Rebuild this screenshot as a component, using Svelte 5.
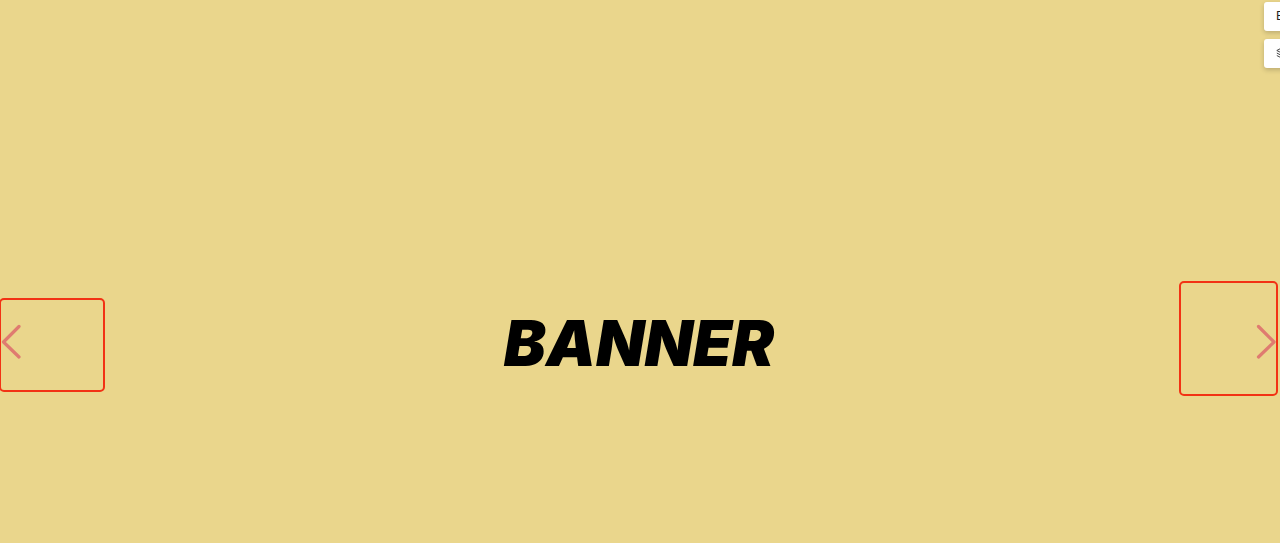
<script>
  const tools = ['text', 'layers'];
</script>

<main class="hero">
  <aside class="tools">
    {#each tools as tool}
      <button type="button" class="tool" aria-label={tool}>
        {#if tool === 'text'}
          E
        {:else}
          <svg width="12" height="12" viewBox="0 0 12 12" fill="none" stroke="#444">
            <path d="M6 .8 11.2 3.5 6 6.2.8 3.5ZM.8 6 6 8.7 11.2 6M.8 8.5 6 11.2 11.2 8.5" />
          </svg>
        {/if}
      </button>
    {/each}
  </aside>

  <div class="slide">
    <button type="button" class="arrow previous" aria-label="Previous">
      <svg width="20" height="36" viewBox="0 0 20 36"><path d="M18 2.5 2.5 18 18 33" /></svg>
    </button>
    <h1>BANNER</h1>
    <button type="button" class="arrow next" aria-label="Next">
      <svg width="20" height="36" viewBox="0 0 20 36"><path d="M2.5 2.5 18 18 2.5 33" /></svg>
    </button>
  </div>
</main>

<style>
  :global(body) {
    margin: 0;
    background: #ead68c;
  }

  .hero {
    position: relative;
    box-sizing: border-box;
    min-height: 100vh;
    padding-top: 281px;
    overflow: hidden;
    background: #ead68c;
    font-family: Inter, sans-serif;
  }

  .slide {
    display: grid;
    grid-template-columns: 1fr auto 1fr;
    align-items: start;
    padding-right: 2px;
  }

  h1 {
    margin: 22px 0 0;
    color: #000;
    font-size: 63px;
    font-style: italic;
    font-weight: 900;
    line-height: 80px;
  }

  .arrow {
    display: flex;
    box-sizing: border-box;
    padding: 0;
    border: 2px solid #f23214;
    border-radius: 5px;
    background: none;
  }

  .arrow svg {
    fill: none;
    stroke: #df7b70;
    stroke-width: 3.2;
    stroke-linecap: round;
    stroke-linejoin: round;
  }

  .previous {
    width: 106px;
    height: 94px;
    margin-top: 17px;
    margin-left: -1px;
    padding-top: 24px;
  }

  .next {
    justify-self: end;
    justify-content: flex-end;
    width: 99px;
    height: 115px;
    padding-top: 41px;
  }

  .tools {
    position: absolute;
    top: 2px;
    right: -14px;
    display: grid;
    gap: 8px;
  }

  .tool {
    display: flex;
    align-items: center;
    width: 30px;
    height: 29px;
    padding: 0 0 2px 12px;
    border: 0;
    border-radius: 3px;
    background: #fff;
    box-shadow: 0 2px 5px #0003;
    color: #222;
    font: 12px Inter, sans-serif;
  }
</style>
